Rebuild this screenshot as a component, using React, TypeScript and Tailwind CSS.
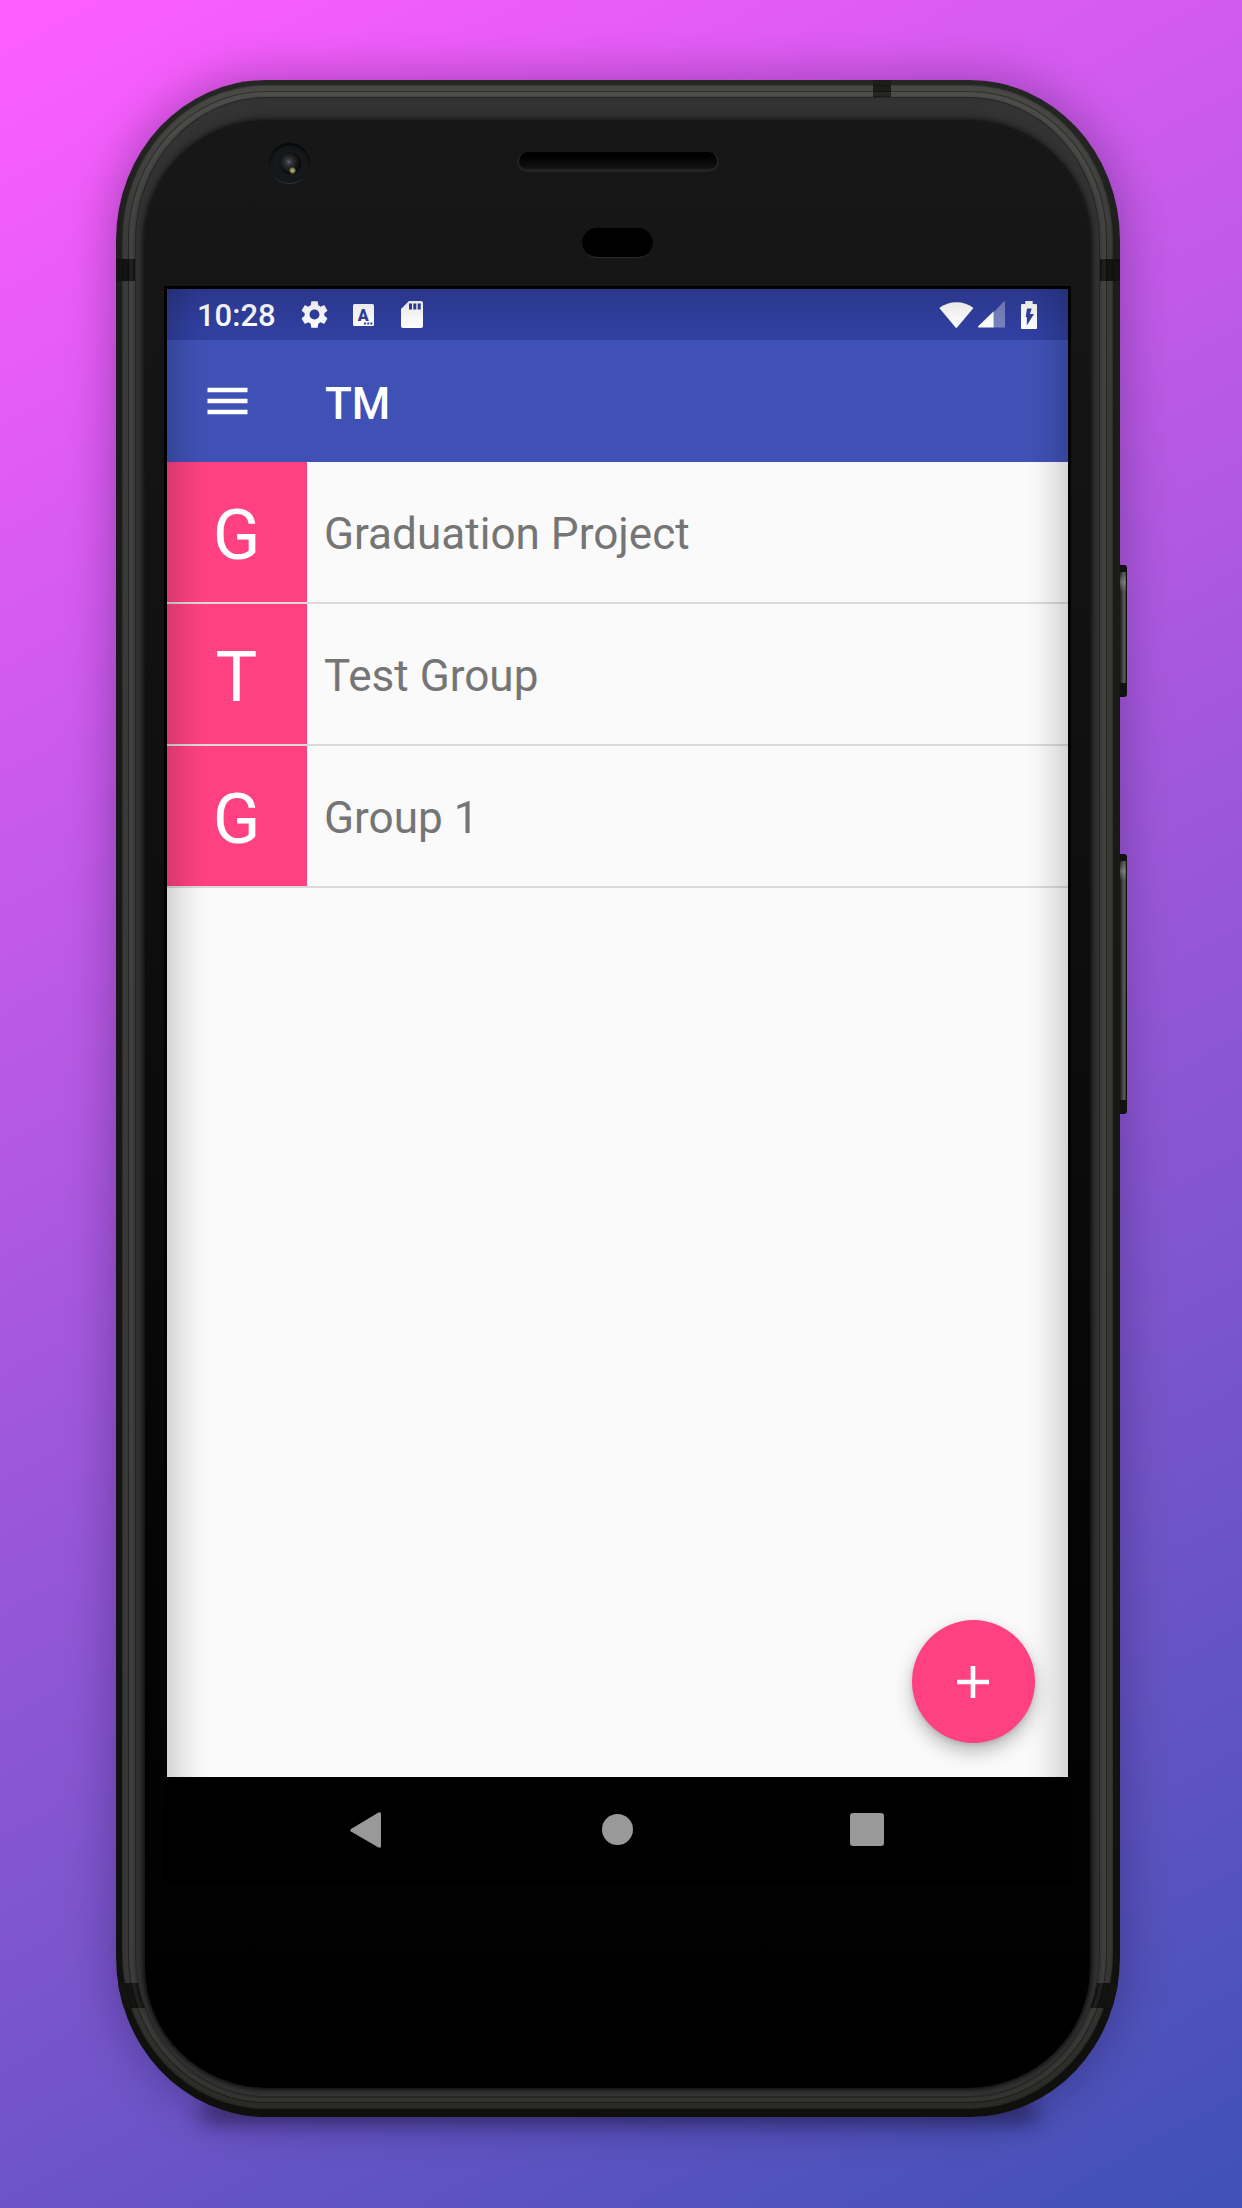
import React from "react";
import { MdSettings } from "react-icons/md";

const groups = ["Graduation Project", "Test Group", "Group 1"];

function StatusBar() {
  return (
    <div className="flex h-[51px] shrink-0 items-center bg-[#303f9f] pl-[30px] pr-[31px] text-white">
      <span className="w-[82px] pt-[2px] text-[31px] font-medium leading-none">10:28</span>
      <MdSettings className="ml-[19px] size-[33px]" />
      <svg className="ml-[22px] h-[22px] w-[21px]" viewBox="0 0 21 22">
        <rect width="21" height="22" rx="1.5" fill="#fff" />
        <text x="10.3" y="16.5" textAnchor="middle" fontSize="16" fontWeight="900" fontFamily="Roboto, sans-serif" fill="#303f9f">A</text>
        <path d="M11 19.5h2M14.2 19.5h2M17.3 19.5h2" stroke="#303f9f" strokeWidth="1.8" />
      </svg>
      <svg className="ml-[27px] h-[27px] w-[22px]" viewBox="0 0 22 27">
        <path d="M8 0h12a2 2 0 0 1 2 2v23a2 2 0 0 1-2 2H2a2 2 0 0 1-2-2V8z" fill="#fff" />
        <path d="M8 2.5h3v6H8zM12.3 2.5h3v6h-3zM16.7 2.5h3v6h-3z" fill="#303f9f" />
      </svg>
      <svg className="ml-auto h-[26px] w-[35px]" viewBox="0 0 35 26">
        <path d="M0.3 6C10-1.8 25-1.8 34.5 6L18 25.5Q17.3 26.3 16.6 25.5z" fill="#fff" />
      </svg>
      <svg className="ml-[4px] h-[27px] w-[27px]" viewBox="0 0 27 27">
        <path d="M15.7 11.2 25.5 .8Q27-.3 27 1.2V26.5H15.7z" fill="#fff" opacity=".35" />
        <path d="M15.7 10.2V26.5H.8Q-.4 26.3.5 25z" fill="#fff" />
      </svg>
      <svg className="ml-[16px] h-[28px] w-[16px]" viewBox="0 0 16 28">
        <path d="M4.3 0h7.4v3H15a1 1 0 0 1 1 1v23a1 1 0 0 1-1 1H1a1 1 0 0 1-1-1V4a1 1 0 0 1 1-1h3.3z" fill="#fff" />
        <path d="M6 7.500h4.700l-1.700 5.500H13L5.800 24.500v-8.500H4.700z" fill="#303f9f" />
      </svg>
    </div>
  );
}

function Screen() {
  return (
    <div className="relative flex h-[1488px] w-[901px] flex-col bg-[#fafafa]">
      <StatusBar />
      <div className="flex h-[122px] shrink-0 items-center bg-[#3f51b5] pl-[40px]">
        <svg className="h-[28px] w-[41px]" viewBox="0 0 41 28">
          <path d="M.5 3h40M.5 14h40M.5 25h40" stroke="#fff" strokeWidth="4.6" />
        </svg>
        <span className="ml-[77px] pt-[5px] text-[44px] font-medium leading-none text-white">TM</span>
      </div>
      {groups.map((name) => (
        <div key={name} className="flex h-[142px] shrink-0 items-center border-b-2 border-[#dadada]">
          <div className="flex h-full w-[140px] items-center justify-center bg-[#ff4081] pr-px pt-[6px] text-[70px] leading-none text-white">
            {name[0]}
          </div>
          <span className="ml-[17px] pt-[5px] text-[44.1px] leading-none text-[#757575]">{name}</span>
        </div>
      ))}
      <div className="absolute bottom-[34px] right-[33.5px] flex size-[123px] items-center justify-center rounded-full bg-[#ff4081] shadow-[0_9px_18px_rgba(0,0,0,0.25),0_2px_5px_rgba(0,0,0,0.12)]">
        <svg className="size-[32px]" viewBox="0 0 32 32">
          <path d="M16 0v32M0 16h32" stroke="#fff" strokeWidth="4.6" />
        </svg>
      </div>
      <div className="pointer-events-none absolute inset-y-0 left-0 w-[42px] bg-[linear-gradient(90deg,rgba(0,0,0,0.15),rgba(0,0,0,0.07)_40%,rgba(0,0,0,0.015)_75%,transparent)]" />
      <div className="pointer-events-none absolute inset-y-0 right-0 w-[42px] bg-[linear-gradient(270deg,rgba(0,0,0,0.15),rgba(0,0,0,0.07)_40%,rgba(0,0,0,0.015)_75%,transparent)]" />
      <div className="pointer-events-none absolute inset-x-0 top-0 h-[40px] bg-[linear-gradient(180deg,rgba(0,0,0,0.13),transparent)]" />
    </div>
  );
}

function NavBar() {
  return (
    <div className="flex h-[107px] w-[901px] items-start bg-black pl-[183px] pt-[35px]">
      <svg className="h-[36px] w-[32px]" viewBox="0 0 32 36">
        <path d="M1 17 28.5.5Q31-.5 31 2v32q0 2.500-2.500 1.500L1 19.500q-1.500-1.200 0-2.500z" fill="#999" />
      </svg>
      <div className="ml-[220px] mt-[2px] size-[31px] rounded-full bg-[#999]" />
      <div className="ml-[217px] mt-px h-[33px] w-[34px] rounded-[3px] bg-[#999]" />
    </div>
  );
}

function FrontHardware() {
  return (
    <div className="h-[166px] pt-[21px]">
      <div className="flex h-[41px] items-center">
        <div className="ml-[124px] flex size-[41px] items-center justify-center rounded-full border-b border-[#303030] bg-[#15181a] shadow-[inset_0_2px_3px_#050505]">
          <div className="relative size-[22px] rounded-full bg-[radial-gradient(circle_at_45%_45%,#5c6478_0,#333_18%,#161616_50%,#030303_75%)]">
            <div className="absolute bottom-0 left-[10px] size-[7px] rounded-full bg-[radial-gradient(circle,#c5c78c,#6b6f3f_50%,transparent_75%)]" />
          </div>
        </div>
        <div className="-mt-[4px] ml-[207px] h-[20px] w-[202px] rounded-full border-x-2 border-b-[3px] border-[#232323] bg-[linear-gradient(#000,#000_25%,#141414)]" />
      </div>
      <div className="mx-auto mt-[44px] h-[30px] w-[71px] rounded-[15px] border-b border-[#2a2a2a] bg-black" />
    </div>
  );
}

function SideButton({ className }: { className: string }) {
  return (
    <div className={`w-[7px] overflow-hidden rounded-r-[3px] bg-[#121212] pb-[14px] pr-px pt-[7px] ${className}`}>
      <div className="h-full w-full bg-[linear-gradient(90deg,#1a1a1a,#4a4a4a_50%,#585858_75%,#303030)]">
        <div className="h-[20px] bg-[linear-gradient(transparent,rgba(170,170,170,0.45),transparent)]" />
      </div>
    </div>
  );
}

export default function App() {
  return (
    <div className="relative flex h-[2208px] w-[1242px] items-start overflow-hidden bg-[linear-gradient(151deg,#ff5eff_0%,#3f51b5_100%)] pl-[116px] pt-[80px] font-[Roboto,sans-serif]">
      <div className="absolute left-[200px] top-[2102px] h-[20px] w-[838px] rounded-full bg-black/45 blur-[10px]" />
      <div className="relative h-[2037px] w-[1004px] overflow-hidden rounded-[150px/160px] bg-[linear-gradient(#262624,#1c1c1a_10%,#171715_50%,#0f0f0d)] pb-[8px] pl-[6px] pr-[7px] pt-[5px] shadow-[0_0_44px_4px_rgba(20,10,50,0.3)]">
        <div className="h-full rounded-[144px/155px] bg-[linear-gradient(#484846,#3a3a38_8%,#373735_92%,#2a2a29)]">
          <div className="absolute left-0 top-[179px] h-[22px] w-[30px] bg-[#131312]" />
          <div className="absolute right-0 top-[179px] h-[22px] w-[30px] bg-[#131312]" />
          <div className="absolute left-[757px] top-0 h-[30px] w-[18px] bg-[#1c1c1b]" />
          <div className="absolute left-0 top-[1903px] h-[25px] w-[40px] bg-[#131312]" />
          <div className="absolute right-0 top-[1903px] h-[25px] w-[40px] bg-[#131312]" />
          <div className="relative h-full rounded-[144px/155px] px-[6px] pb-[6px] pt-[6px] shadow-[inset_0_0_1px_1px_rgba(0,0,0,0.2)]">
            <div className="h-full rounded-[138px/148px] border border-black/35 px-[6px] pb-[5px] pt-[5px] shadow-[inset_0_0_0_4px_rgba(130,130,126,0.1)]">
              <div className="h-full overflow-hidden rounded-[131px/143px] border border-[#252525] bg-[#333] px-[9px] pb-[8px] pt-[24px]">
                <div className="flex h-full flex-col rounded-[122px/120px] bg-[linear-gradient(#171717,#141414_15%,#0e0e0e_40%,#040404_75%,#000)] shadow-[0_0_4px_1px_#0c0c0c,0_-2px_10px_#171717]">
                  <FrontHardware />
                  <div className="mx-auto -mt-[2px] border-[3px] border-b-0 border-black">
                    <Screen />
                    <NavBar />
                  </div>
                </div>
              </div>
            </div>
          </div>
        </div>
      </div>
      <div className="relative">
        <SideButton className="mt-[485px] h-[132px]" />
        <SideButton className="mt-[157px] h-[260px]" />
      </div>
    </div>
  );
}
